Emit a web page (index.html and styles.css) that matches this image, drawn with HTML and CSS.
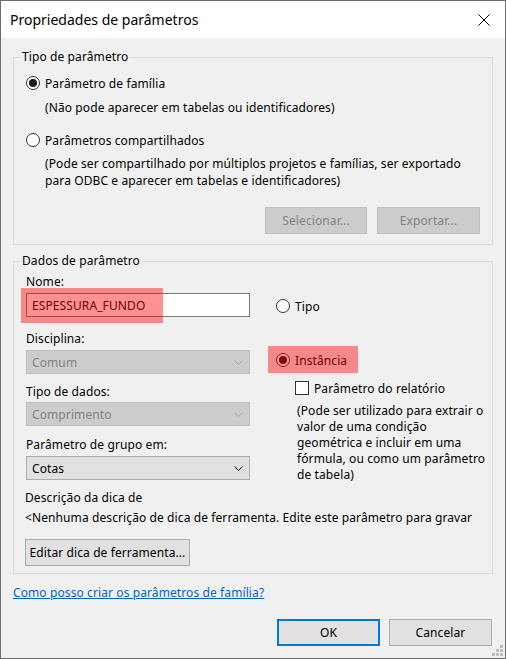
FILE: index.html
```html
<!DOCTYPE html>
<html lang="pt">
<head>
<meta charset="utf-8">
<title>Propriedades de parâmetros</title>
<link rel="stylesheet" href="styles.css">
</head>
<body>
<div class="window">
  <div class="titlebar">
    <span class="title">Propriedades de parâmetros</span>
    <svg class="close" width="12" height="12" viewBox="0 0 12 12"><path d="M0.5 0.5 L11.5 11.5 M11.5 0.5 L0.5 11.5" stroke="#000" stroke-width="1" fill="none"/></svg>
  </div>
  <div class="content">
    <section class="gb gb1">
      <div class="gb-title">Tipo de parâmetro</div>
      <div class="gb-body gb1-body">
        <div class="radio r-fam"><span class="rb checked"></span>Parâmetro de família</div>
        <div class="desc d-fam">(Não pode aparecer em tabelas ou identificadores)</div>
        <div class="radio r-comp"><span class="rb"></span>Parâmetros compartilhados</div>
        <div class="desc d-comp">(Pode ser compartilhado por múltiplos projetos e famílias, ser exportado<br>para ODBC e aparecer em tabelas e identificadores)</div>
        <div class="btnrow">
          <div class="btn disabled b-sel">Selecionar...</div>
          <div class="btn disabled b-exp">Exportar...</div>
        </div>
      </div>
    </section>
    <section class="gb gb2">
      <div class="gb-title">Dados de parâmetro</div>
      <div class="gb-body gb2-body">
        <div class="cols">
          <div class="col-left">
            <div class="lbl l-nome">Nome:</div>
            <div class="field">
              <div class="input">ESPESSURA_FUNDO</div>
              <div class="hl hl-nome"></div>
            </div>
            <div class="lbl l-disc">Disciplina:</div>
            <div class="combo disabled c-disc"><span>Comum</span><svg class="chev" width="9" height="5" viewBox="0 0 9 5"><path d="M0.5 0.5 L4.5 4.5 L8.5 0.5" fill="none" stroke-width="1"/></svg></div>
            <div class="lbl l-tipo">Tipo de dados:</div>
            <div class="combo disabled c-tipo"><span>Comprimento</span><svg class="chev" width="9" height="5" viewBox="0 0 9 5"><path d="M0.5 0.5 L4.5 4.5 L8.5 0.5" fill="none" stroke-width="1"/></svg></div>
            <div class="lbl l-grupo">Parâmetro de grupo em:</div>
            <div class="combo c-grupo"><span>Cotas</span><svg class="chev" width="9" height="5" viewBox="0 0 9 5"><path d="M0.5 0.5 L4.5 4.5 L8.5 0.5" fill="none" stroke-width="1"/></svg></div>
          </div>
          <div class="col-right">
            <div class="radio r-tipo"><span class="rb"></span>Tipo</div>
            <div class="radio r-inst"><span class="rb checked"></span>Instância<div class="hl hl-inst"></div></div>
            <div class="check"><span class="cb"></span>Parâmetro do relatório</div>
            <div class="desc d-inst">(Pode ser utilizado para extrair o<br>valor de uma condição<br>geométrica e incluir em uma<br>fórmula, ou como um parâmetro<br>de tabela)</div>
          </div>
        </div>
        <div class="lbl l-dica">Descrição da dica de</div>
        <div class="lbl l-none">&lt;Nenhuma descrição de dica de ferramenta. Edite este parâmetro para gravar</div>
        <div class="btn b-edit">Editar dica de ferramenta...</div>
      </div>
    </section>
    <a class="link" href="#">Como posso criar os parâmetros de família?</a>
    <div class="footer">
      <div class="btn b-ok">OK</div>
      <div class="btn b-cancel">Cancelar</div>
    </div>
  </div>
  <svg class="grip" width="11" height="11" viewBox="0 0 11 11">
    <rect x="8" y="0" width="3" height="3"/>
    <rect x="4" y="4" width="3" height="3"/><rect x="8" y="4" width="3" height="3"/>
    <rect x="0" y="8" width="3" height="3"/><rect x="4" y="8" width="3" height="3"/><rect x="8" y="8" width="3" height="3"/>
  </svg>
</div>
</body>
</html>
```
FILE: styles.css
```css
* { box-sizing: border-box; }
html, body { margin: 0; padding: 0; }
body {
  width: 506px;
  height: 659px;
  font-family: "Noto Sans", "DejaVu Sans", sans-serif;
  font-size: 12px;
  letter-spacing: 0.1px;
  color: #000;
  background: #f0f0f0;
}
.window {
  position: relative;
  width: 506px;
  height: 659px;
  border: 1px solid #6e6e6e;
  background: #f0f0f0;
}
.titlebar {
  height: 37px;
  background: #fff;
  display: flex;
  align-items: center;
  justify-content: space-between;
  padding: 0 15px 0 9px;
}
.title { font-size: 14px; line-height: 20px; letter-spacing: 0; }
.close { display: block; }

.content { padding: 19px 12px 0 12px; }

.gb {
  border: 1px solid #dcdcdc;
}
.gb-title {
  margin: -9px 0 0 6px;
  padding: 0 2px;
  width: max-content;
  line-height: 16px;
  background: #f0f0f0;
}
.gb2 { margin-top: 16px; }
.gb-body { padding: 0 12px 10px 12px; }
.gb2-body { padding-bottom: 7px; }

.radio {
  position: relative;
  height: 18px;
  display: flex;
  align-items: center;
  gap: 5px;
  white-space: nowrap;
}
.rb {
  width: 14px;
  height: 14px;
  border: 1px solid #333;
  border-radius: 50%;
  background: #fff;
  display: flex;
  align-items: center;
  justify-content: center;
  flex: none;
}
.rb.checked::after {
  content: "";
  width: 8px;
  height: 8px;
  border-radius: 50%;
  background: #1a1a1a;
}
.desc { padding-left: 19px; line-height: 16px; white-space: nowrap; }

.r-fam { margin-top: 9px; }
.d-fam { margin-top: 8px; }
.r-comp { margin-top: 15px; }
.d-comp { margin-top: 6px; line-height: 17px; }

.btnrow {
  display: flex;
  justify-content: flex-end;
  gap: 10px;
  margin-top: 18px;
}
.btn {
  height: 27px;
  display: flex;
  align-items: center;
  justify-content: center;
  background: #e1e1e1;
  border: 1px solid #adadad;
  white-space: nowrap;
}
.btn.disabled {
  background: #cccccc;
  border-color: #bfbfbf;
  color: #838383;
}
.b-sel { width: 102px; }
.b-exp { width: 103px; }

.cols { display: flex; gap: 26px; }
.col-left { width: 224px; flex: none; display: flex; flex-direction: column; }
.col-right { display: flex; flex-direction: column; }

.lbl { line-height: 16px; white-space: nowrap; }
.l-nome { margin-top: 5px; }
.field { position: relative; margin-top: 3px; }
.input {
  height: 24px;
  background: #fff;
  border: 1px solid #7a7a7a;
  padding: 0 5px;
  display: flex;
  align-items: center;
}
.hl {
  position: absolute;
  background: rgba(255, 0, 0, 0.43);
  pointer-events: none;
}
.hl-nome { left: -5px; top: -5px; width: 142px; height: 35px; }
.l-disc { margin-top: 14px; }
.combo {
  height: 24px;
  display: flex;
  align-items: center;
  justify-content: space-between;
  padding: 0 6px 0 5px;
  background: #e1e1e1;
  border: 1px solid #adadad;
  margin-top: 3px;
}
.combo .chev path { stroke: #000; }
.combo.disabled { background: #cccccc; border-color: #bfbfbf; color: #838383; }
.combo.disabled .chev path { stroke: #a6a6a6; }
.l-tipo { margin-top: 10px; }
.c-tipo { margin-top: 2px; }
.l-grupo { margin-top: 11px; }

.r-tipo { margin-top: 28px; }
.r-inst { margin-top: 36px; }
.hl-inst { left: -8px; top: -5px; width: 90px; height: 27px; }
.check {
  margin-top: 11px;
  padding-left: 19px;
  height: 16px;
  display: flex;
  align-items: center;
  gap: 5px;
  white-space: nowrap;
}
.cb {
  width: 14px;
  height: 14px;
  border: 1px solid #333;
  background: #fff;
  flex: none;
}
.d-inst { margin-top: 7px; padding-left: 21px; }

.l-dica { margin-top: 7px; margin-left: -1px; }
.l-none { margin-top: 4px; margin-left: -1px; overflow: hidden; width: 456px; }
.b-edit { margin-top: 13px; margin-left: -1px; width: 165px; }

.link {
  display: block;
  margin-top: 11px;
  line-height: 16px;
  color: #0066cc;
  text-decoration: underline;
  width: max-content;
}
.footer {
  display: flex;
  justify-content: flex-end;
  gap: 9px;
  margin-top: 18px;
  padding-right: 1px;
}
.b-ok { width: 103px; border: 2px solid #0078d7; }
.b-cancel { width: 103px; }

.grip {
  position: absolute;
  right: 2px;
  bottom: 2px;
  fill: #bfbfbf;
}
```
